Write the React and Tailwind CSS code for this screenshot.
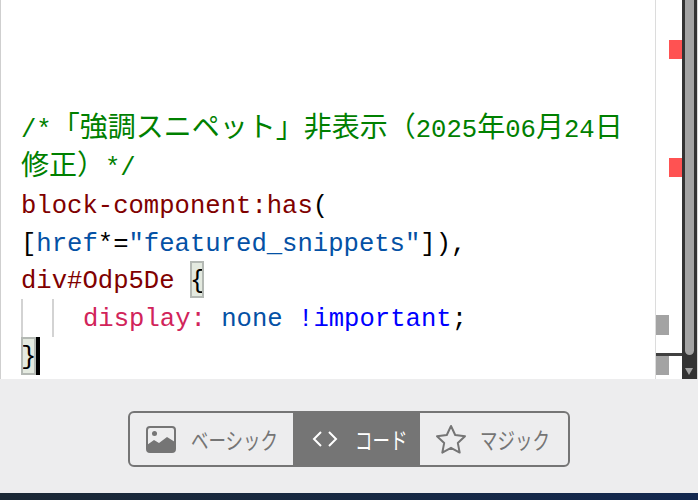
const mono = 'font-["Liberation_Mono","Noto_Sans_CJK_JP",monospace]';

// latin text is narrower than the 28px kanji next to it
function L({ children, className = '' }) {
  return <span className={`text-[25.6px] ${className}`}>{children}</span>;
}

function ImageIcon() {
  return (
    <svg width="30" height="28" viewBox="0 0 30 28" className="shrink-0">
      <rect x="1" y="2" width="28" height="25" rx="3" fill="none" stroke="#757575" strokeWidth="2" />
      <circle cx="8.5" cy="8.5" r="2.5" fill="#757575" />
      <path d="M1 20 L8 15 L13 18 L21 12 L29 17 V24 a3 3 0 0 1 -3 3 H4 a3 3 0 0 1 -3 -3 Z" fill="#757575" />
    </svg>
  );
}

function CodeIcon() {
  return (
    <svg width="26" height="18" viewBox="0 0 26 18" fill="none" stroke="#fff" strokeWidth="2" className="shrink-0">
      <path d="M9 2 L2 9 L9 16" />
      <path d="M17 2 L24 9 L17 16" />
    </svg>
  );
}

function StarIcon() {
  return (
    <svg width="32" height="30" viewBox="0 0 32 30" fill="none" stroke="#757575" strokeWidth="2" strokeLinejoin="round" className="shrink-0">
      <path d="M16 2 L20.2 11 L30 12.2 L22.8 18.9 L24.7 28.6 L16 23.8 L7.3 28.6 L9.2 18.9 L2 12.2 L11.8 11 Z" />
    </svg>
  );
}

export default function App() {
  return (
    <div className="w-[698px] h-[500px] overflow-hidden flex flex-col bg-[#ededee]">
      <div className="h-[379px] flex shrink-0">
        {/* editor */}
        <div className={`w-[656px] bg-white border-l border-l-[#cfcfcf] border-r border-r-[#dcdcdc] pt-[109px] pl-[20px] text-[28px] leading-[42px] text-black whitespace-pre ${mono}`}>
          <div className="h-[38px] text-[#008000]"><L>/*</L>「強調スニペット」非表示（<L>2025</L>年<L>06</L>月<L>24</L>日</div>
          <div className="h-[38px] text-[#008000]">修正）<L>*/</L></div>
          <div className="h-[38px] text-[#800000]"><L>block-component:has<span className="text-black">(</span></L></div>
          <div className="h-[38px]"><L>[<span className="text-[#0451a5]">href</span>*=<span className="text-[#0451a5]">"featured_snippets"</span>]),</L></div>
          <div className="h-[38px] flex">
            <L className="text-[#800000]">div#Odp5De </L>
            <span className="text-[25.6px] bg-[#e4eae0] outline-2 -outline-offset-2 outline-[#b4b9b4] h-[37px] w-[14px]">{'{'}</span>
          </div>
          <div className="h-[38px] flex">
            <div className="w-[31px] h-[38px] border-l-2 border-l-[#d3d3d3]" />
            <div className="w-[31px] h-[38px] border-l-2 border-l-[#d3d3d3]" />
            <L><span className="text-[#d1245a]">display:</span> <span className="text-[#0451a5]">none</span> <span className="text-[#0000ff]">!important</span>;</L>
          </div>
          <div className="h-[38px] flex">
            <span className="text-[25.6px] bg-[#e4eae0] outline-2 -outline-offset-2 outline-[#b4b9b4] w-[15px] h-[38px]">{'}'}</span>
            <div className="w-[4px] h-[38px] bg-black" />
          </div>
        </div>
        {/* overview ruler */}
        <div className="relative w-[26px] bg-white flex">
          <div className="w-[13px] pt-[315px] flex flex-col gap-[21px]">
            <div className="h-[20px] bg-[#a3a3a3]" />
            <div className="h-[19px] bg-[#a3a3a3]" />
          </div>
          <div className="w-[13px] pt-[40px] flex flex-col gap-[99px]">
            <div className="h-[19px] bg-[#ff5252]" />
            <div className="h-[19px] bg-[#ff5252]" />
          </div>
          <div className="absolute left-0 right-0 top-[353px] h-[3px] bg-[#404040]" />
        </div>
        {/* scrollbar */}
        <div className="w-[15px] bg-[#333333] flex flex-col items-start pl-[3px]">
          <div className="w-[9px] h-[355px] bg-[#a3a3a3] rounded-b-[5px]" />
          <div className="w-0 h-0 mt-[13px] border-x-[4.5px] border-x-transparent border-t-[7px] border-t-[#a3a3a3]" />
        </div>
        <div className="w-[1px] bg-[#d8d8d8]" />
      </div>

      {/* editor mode switch */}
      <div className="flex-1 flex justify-center pt-[32px]">
        <div className='w-[442px] h-[56px] flex border-2 border-[#757575] rounded-[6px] overflow-hidden font-["Noto_Sans_CJK_JP",sans-serif] text-[23px]'>
          <div className="w-[163px] flex items-center pl-[16px] gap-[15px] text-[#757575]">
            <ImageIcon />
            <span className="inline-block whitespace-nowrap origin-left scale-x-[0.76]">ベーシック</span>
          </div>
          <div className="w-[127px] flex items-center pl-[19px] gap-[17px] bg-[#757575] text-white">
            <CodeIcon />
            <span className="inline-block whitespace-nowrap origin-left scale-x-[0.76]">コード</span>
          </div>
          <div className="flex-1 flex items-center pl-[15px] gap-[13px] text-[#757575]">
            <StarIcon />
            <span className="inline-block whitespace-nowrap origin-left scale-x-[0.76]">マジック</span>
          </div>
        </div>
      </div>
      <div className="h-[7px] shrink-0 bg-gradient-to-r from-[#1b2835] to-[#13284f]" />
    </div>
  );
}
